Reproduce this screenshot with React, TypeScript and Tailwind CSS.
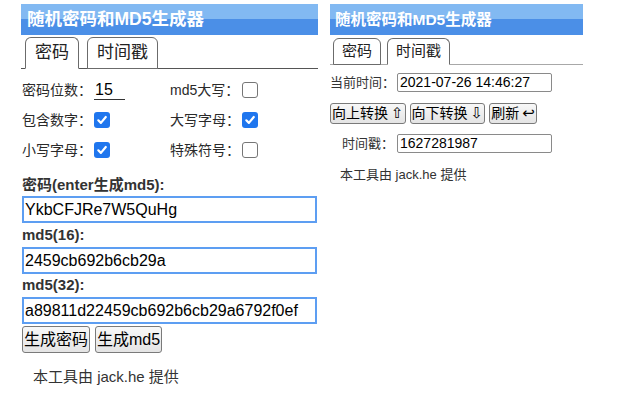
import React from 'react';

const font = { fontFamily: '"Liberation Sans", "Noto Sans CJK SC", sans-serif' };

function Box({ checked }: { checked?: boolean }) {
  if (checked) {
    return (
      <span className="inline-flex h-[16px] w-[16px] items-center justify-center rounded-[3px] bg-[#1f76ee]">
        <svg width="12" height="12" viewBox="0 0 12 12">
          <path d="M2.3 6.3l2.6 2.6L9.8 3" fill="none" stroke="white" strokeWidth="2.2" strokeLinecap="round" strokeLinejoin="round" />
        </svg>
      </span>
    );
  }
  return <span className="inline-block h-[16px] w-[16px] rounded-[3px] border border-[#767676] bg-white" />;
}

function Header({ big }: { big?: boolean }) {
  return (
    <div
      className={`flex items-center bg-[linear-gradient(to_bottom,#82b9f2_50%,#4b8fe7_50%)] font-bold text-white ${
        big ? 'h-[31px] pl-[6px] text-[17.5px]' : 'h-[31px] pl-[5px] text-[15.5px]'
      }`}
    >
      随机密码和MD5生成器
    </div>
  );
}

function Tab({ label, active, big }: { label: string; active?: boolean; big?: boolean }) {
  return (
    <div
      className={`-mb-px flex items-center justify-center rounded-t-[6px] border border-[#6b6b6b] bg-white text-[#222] ${
        active ? 'border-b-white' : ''
      } ${big ? 'h-[32px] px-[9px] text-[17px]' : 'h-[27px] px-[8px] text-[15px]'}`}
    >
      {label}
    </div>
  );
}

function Field({ value }: { value: string }) {
  return (
    <div className="flex h-[27px] w-[295px] items-center border-2 border-[#5d9ef2] pl-[1px] text-[16px] text-black">
      {value}
    </div>
  );
}

function Btn({ children, small }: { children: React.ReactNode; small?: boolean }) {
  return (
    <div
      className={`flex items-center justify-center rounded-[3px] border border-[#7a7a7a] bg-[linear-gradient(to_bottom,#f8f8f8,#e4e4e4)] text-black ${
        small ? 'h-[21px] px-[1px] text-[14px]' : 'h-[27px] px-[1px] text-[16px]'
      }`}
    >
      {children}
    </div>
  );
}

function Row({ label, children }: { label: string; children: React.ReactNode }) {
  return (
    <div className="flex h-[30px] items-center">
      <span className="w-[72px] whitespace-nowrap text-[14px]">{label}</span>
      {children}
    </div>
  );
}

function PasswordPanel() {
  return (
    <div className="flex w-[297px] flex-col">
      <Header big />
      <div className="mt-[2px] flex gap-[8px] border-b border-[#555] pl-[4px]">
        <Tab label="密码" active big />
        <Tab label="时间戳" big />
      </div>
      <div className="mt-[6px] grid grid-cols-[148px_1fr] pl-[1px] text-[#2a2a2a]">
        <Row label="密码位数：">
          <span className="w-[31px] border-b border-[#333] pl-[1px] text-[16px] leading-[19px] text-black">15</span>
        </Row>
        <Row label="md5大写：">
          <Box />
        </Row>
        <Row label="包含数字：">
          <Box checked />
        </Row>
        <Row label="大写字母：">
          <Box checked />
        </Row>
        <Row label="小写字母：">
          <Box checked />
        </Row>
        <Row label="特殊符号：">
          <Box />
        </Row>
      </div>
      <div className="mt-[9px] flex flex-col pl-[1px]">
        <div className="flex h-[22px] items-center text-[15px] font-bold text-[#333]">密码(enter生成md5):</div>
        <Field value="YkbCFJRe7W5QuHg" />
        <div className="flex h-[24px] items-center text-[15px] font-bold text-[#333]">md5(16):</div>
        <Field value="2459cb692b6cb29a" />
        <div className="flex h-[23px] items-center text-[15px] font-bold text-[#333]">md5(32):</div>
        <Field value="a89811d22459cb692b6cb29a6792f0ef" />
        <div className="mt-[2px] flex gap-[5px]">
          <Btn>生成密码</Btn>
          <Btn>生成md5</Btn>
        </div>
        <div className="mt-[14px] pl-[11px] text-[15px] leading-[20px] text-[#333]">本工具由 jack.he 提供</div>
      </div>
    </div>
  );
}

function Line({ label, value }: { label: string; value: string }) {
  return (
    <div className="flex items-center">
      <span className="w-[64px] whitespace-nowrap text-right text-[13px] text-[#333]">{label}</span>
      <div className="ml-[3px] flex h-[19px] w-[155px] items-center rounded-[2px] border border-[#8a8a8a] pl-[2px] text-[14px] text-black">
        {value}
      </div>
    </div>
  );
}

function TimestampPanel() {
  return (
    <div className="flex w-[253px] flex-col">
      <Header />
      <div className="mt-[3px] flex gap-[6px] border-b border-[#a8a8a8] pl-[3px]">
        <Tab label="密码" />
        <Tab label="时间戳" active />
      </div>
      <div className="mt-[8px]">
        <Line label="当前时间：" value="2021-07-26 14:46:27" />
      </div>
      <div className="mt-[10px] flex gap-[4px]">
        <Btn small>
          向上转换<span className="ml-[3px] font-['DejaVu_Sans'] text-[15px]">⇧</span>
        </Btn>
        <Btn small>
          向下转换<span className="ml-[3px] font-['DejaVu_Sans'] text-[15px]">⇩</span>
        </Btn>
        <Btn small>
          刷新<span className="ml-[3px] font-['DejaVu_Sans'] text-[15px]">↩</span>
        </Btn>
      </div>
      <div className="mt-[10px]">
        <Line label="时间戳：" value="1627281987" />
      </div>
      <div className="mt-[13px] pl-[10px] text-[13px] leading-[18px] text-[#333]">本工具由 jack.he 提供</div>
    </div>
  );
}

export default function App() {
  return (
    <div className="h-[400px] w-[640px] bg-white" style={font}>
      <div className="flex gap-[12px] pl-[21px] pt-[4px]">
        <PasswordPanel />
        <TimestampPanel />
      </div>
    </div>
  );
}
